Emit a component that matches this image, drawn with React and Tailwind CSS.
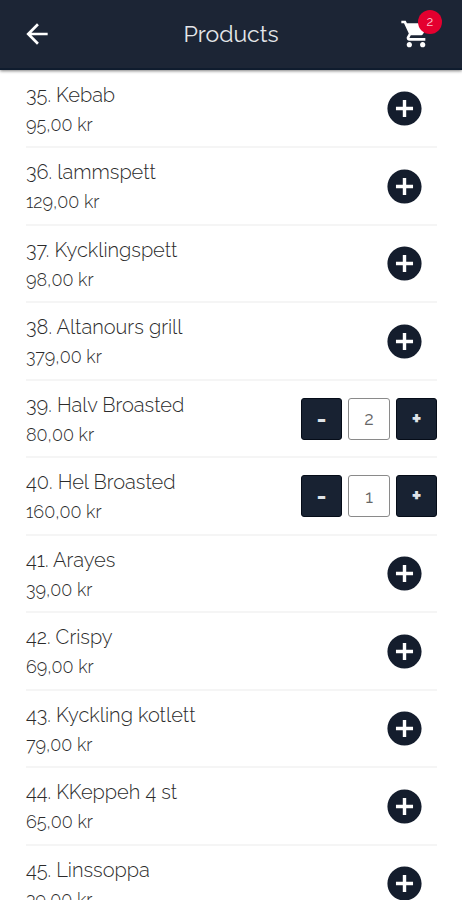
import { useState } from "react";
import { MdAddCircle, MdArrowBack, MdShoppingCart } from "react-icons/md";

const PRODUCTS = [
    { id: 35, name: "Kebab", price: "95,00" },
    { id: 36, name: "lammspett", price: "129,00" },
    { id: 37, name: "Kycklingspett", price: "98,00" },
    { id: 38, name: "Altanours grill", price: "379,00" },
    { id: 39, name: "Halv Broasted", price: "80,00" },
    { id: 40, name: "Hel Broasted", price: "160,00" },
    { id: 41, name: "Arayes", price: "39,00" },
    { id: 42, name: "Crispy", price: "69,00" },
    { id: 43, name: "Kyckling kotlett", price: "79,00" },
    { id: 44, name: "KKeppeh 4 st", price: "65,00" },
    { id: 45, name: "Linssoppa", price: "39,00" },
];

function Header({ count }) {
    return (
        <header className="relative z-10 shrink-0 h-[70px] pl-[21px] pr-6 flex items-center justify-between bg-[#1c2535] border-b-2 border-[#0f1c2e] text-white shadow-[0_1px_3px_rgba(0,0,0,0.5)]">
            <button type="button" aria-label="Back" className="w-[41px]">
                <MdArrowBack className="w-[32px] h-[32px]" />
            </button>

            <h1 className="text-[23px] leading-8 text-[#e4e6e9]">Products</h1>

            <button type="button" aria-label="Cart" className="relative w-[38px]">
                <MdShoppingCart className="w-[32px] h-[32px]" />
                {count > 0 && (
                    <span className="absolute -top-2 -right-1 w-6 h-6 rounded-full bg-[#e4002f] text-[13px] leading-6 text-center text-[#ffc4ce]">
                        {count}
                    </span>
                )}
            </button>
        </header>
    );
}

function Stepper({ name, value, onChange }) {
    return (
        <div className="flex gap-[6px]">
            <button
                type="button"
                aria-label={`Remove one ${name}`}
                onClick={() => onChange(value - 1)}
                className="w-[41px] h-[42px] rounded-[3px] bg-[#182232] border border-[#050c18] text-[24px] leading-8 font-bold text-[#dfe3e8]"
            >
                -
            </button>
            <input
                type="text"
                inputMode="numeric"
                aria-label={`Quantity of ${name}`}
                value={value}
                onChange={(e) => onChange(Number(e.target.value) || 0)}
                className="w-[42px] h-[42px] rounded-[3px] border border-[#8a8a8a] bg-white text-center text-[18px] text-[#666]"
            />
            <button
                type="button"
                aria-label={`Add one ${name}`}
                onClick={() => onChange(value + 1)}
                className="w-[41px] h-[42px] rounded-[3px] bg-[#182232] border border-[#050c18] text-[24px] leading-8 font-bold text-[#dfe3e8]"
            >
                +
            </button>
        </div>
    );
}

function App() {
    const [cart, setCart] = useState({ 39: 2, 40: 1 });

    const setQuantity = (id, quantity) => {
        setCart({ ...cart, [id]: Math.max(0, quantity) });
    };

    const count = Object.values(cart).filter((q) => q > 0).length;

    return (
        <div className="h-screen flex flex-col bg-white font-['Raleway','Lato',sans-serif] oldstyle-nums">
            <Header count={count} />

            {/* PRODUCT LIST */}
            <main className="flex-1 min-h-0 overflow-y-auto [scrollbar-width:none]">
                <ul className="pt-px pl-[26px] pr-[25px]">
                    {PRODUCTS.map(({ id, name, price }) => (
                        <li
                            key={id}
                            className="odd:h-[77px] even:h-[78px] flex items-center justify-between border-b-2 border-[#f5f5f5]"
                        >
                            <div className="pt-0.5 font-light text-[#2b2b2b]">
                                <p className="text-[20px] leading-[29px]">
                                    {id}. {name}
                                </p>
                                <p className="text-[18px] leading-[29px]">{price} kr</p>
                            </div>

                            {cart[id] > 0 ? (
                                <Stepper
                                    name={name}
                                    value={cart[id]}
                                    onChange={(q) => setQuantity(id, q)}
                                />
                            ) : (
                                <button
                                    type="button"
                                    aria-label={`Add ${name}`}
                                    onClick={() => setQuantity(id, 1)}
                                    className="mr-3 text-[#141d2d]"
                                >
                                    <MdAddCircle className="w-[41px] h-[41px]" />
                                </button>
                            )}
                        </li>
                    ))}
                </ul>
            </main>
        </div>
    );
}

export default App;
